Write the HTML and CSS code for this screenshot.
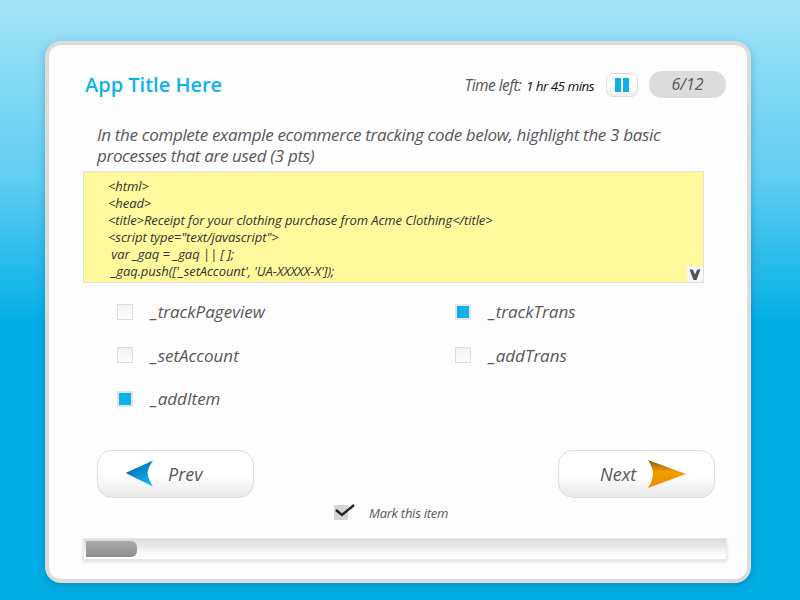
FILE: index.html
```html
<!DOCTYPE html>
<html lang="en">
<head>
    <meta charset="UTF-8">
    <title>App Title Here</title>
    <link rel="stylesheet" href="styles.css">
</head>
<body>

    <div class="card">
        <div class="header">
            <h1>App Title Here</h1>
            <div class="time">Time left: <b>1 hr 45 mins</b></div>
            <button class="pause" type="button" aria-label="Pause"><i></i><i></i></button>
            <div class="count">6/12</div>
        </div>

        <p class="question">In the complete example ecommerce tracking code below, highlight the 3 basic processes that are used (3 pts)</p>

        <div class="code">
<pre>&lt;html&gt;
&lt;head&gt;
&lt;title&gt;Receipt for your clothing purchase from Acme Clothing&lt;/title&gt;
&lt;script type="text/javascript"&gt;
 var _gaq = _gaq || [ ];
 _gaq.push(['_setAccount', 'UA-XXXXX-X']);</pre>
            <span class="scroll">
                <svg width="12" height="13" viewBox="0 0 12 12"><path d="M0.5 1 L3.8 1 L6 6 L8.2 1 L11.5 1 L7.5 11.5 L4.5 11.5 Z" fill="#555"/></svg>
            </span>
        </div>

        <div class="options">
            <label class="option"><span class="box"></span>_trackPageview</label>
            <label class="option"><span class="box on"></span>_trackTrans</label>
            <label class="option"><span class="box"></span>_setAccount</label>
            <label class="option"><span class="box"></span>_addTrans</label>
            <label class="option"><span class="box on"></span>_addItem</label>
        </div>

        <div class="nav">
            <button class="btn prev" type="button">
                <svg width="29" height="27" viewBox="0 0 29 27">
                    <defs>
                        <linearGradient id="blue" x1="0" y1="0" x2="0.7" y2="1">
                            <stop offset="0" stop-color="#0a5a90"/>
                            <stop offset="0.5" stop-color="#0a86c6"/>
                            <stop offset="1" stop-color="#10b6f0"/>
                        </linearGradient>
                    </defs>
                    <path d="M0.5 13 L28 0.5 Q23 8 22.5 13 Q23 19 28 26.5 Z" fill="url(#blue)"/>
                </svg>
                Prev
            </button>
            <button class="btn next" type="button">
                Next
                <svg width="38" height="28" viewBox="0 0 38 28">
                    <defs>
                        <linearGradient id="orange" x1="0" y1="0" x2="0" y2="1">
                            <stop offset="0" stop-color="#8f5a10"/>
                            <stop offset="0.42" stop-color="#f29c00"/>
                            <stop offset="1" stop-color="#e88f00"/>
                        </linearGradient>
                    </defs>
                    <path d="M0 0 L38 14 L0 28 Q5 20 5 14 Q5 8 0 0 Z" fill="url(#orange)"/>
                </svg>
            </button>
        </div>

        <label class="mark">
            <span class="mark-box">
                <svg width="22" height="16" viewBox="0 0 22 16"><path d="M2 7 L8 12 L20 2" fill="none" stroke="#222" stroke-width="2.4"/></svg>
            </span>
            Mark this item
        </label>

        <div class="progress"><div class="bar"></div></div>
    </div>

</body>
</html>
```

FILE: styles.css
```css
html, body {
    height: 100%;
}
body {
    margin: 0;
    font-family: "Open Sans", Arial, sans-serif;
    font-style: italic;
    color: #58585a;
    background: linear-gradient(#a3e3f8 0%, #5fcdf2 30%, #00aee6 54%, #00aee6 100%);
    overflow: hidden;
}
.card {
    box-sizing: border-box;
    width: 706px;
    height: 542px;
    margin: 0 0 0 45px;
    position: relative;
    top: 41px;
    padding: 26px 21px 0 34px;
    background: #fdfdfd;
    border: 4px solid #dcdcdc;
    border-radius: 16px;
    box-shadow: 0 3px 8px rgba(0, 80, 120, 0.3);
}
.header {
    display: flex;
    align-items: center;
    height: 27px;
}
h1 {
    margin: 0 auto 0 2px;
    font-size: 20px;
    font-weight: 600;
    font-style: normal;
    color: #0db4ea;
}
.time {
    font-size: 15.5px;
    letter-spacing: -0.55px;
}
.time b {
    margin-left: 1px;
    font-size: 13.5px;
    font-weight: 400;
    color: #111;
}
.pause {
    display: flex;
    justify-content: center;
    gap: 2px;
    box-sizing: border-box;
    width: 32px;
    height: 24px;
    margin: 0 11px 0 12px;
    padding: 4px 0;
    background: linear-gradient(#fff 50%, #eee);
    border: 1px solid #ddd;
    border-radius: 7px;
}
.pause i {
    width: 6px;
    background: #0db0ea;
}
.count {
    width: 77px;
    height: 27px;
    line-height: 27px;
    text-align: center;
    font-size: 16px;
    background: #dcdcdc;
    border-radius: 13px;
}
.question {
    margin: 26px 30px 0 14px;
    font-size: 17px;
    line-height: 21px;
    letter-spacing: -0.33px;
}
.code {
    position: relative;
    box-sizing: border-box;
    width: 621px;
    height: 112px;
    margin: 5px 0 0 0;
    padding: 6px 0 0 24px;
    background: #fff99e;
    border: 1px solid #e0e0e0;
}
pre {
    margin: 0;
    font-family: "Open Sans", Arial, sans-serif;
    font-size: 13px;
    line-height: 17px;
    letter-spacing: -0.08px;
    color: #333;
}
.scroll {
    position: absolute;
    right: 0;
    bottom: 0;
    display: flex;
    align-items: center;
    justify-content: center;
    width: 16px;
    height: 16px;
    background: #f6f6f6;
}
.options {
    display: grid;
    grid-template-columns: 338px auto;
    grid-auto-rows: 43.5px;
    margin: 6.75px 0 0 34px;
}
.option {
    display: flex;
    align-items: center;
    height: 43.5px;
    font-size: 17px;
}
.box {
    box-sizing: border-box;
    width: 16px;
    height: 16px;
    margin-right: 18px;
    background: linear-gradient(#f2f2f2, #fdfdfd);
    border: 1px solid #ddd;
}
.box.on {
    background: #0db0ea;
    border: 2px solid #e4e4e4;
}
.nav {
    display: flex;
    justify-content: space-between;
    margin: 29.25px 11px 0 14px;
}
.btn {
    display: flex;
    align-items: center;
    box-sizing: border-box;
    width: 157px;
    height: 48px;
    font-family: inherit;
    font-style: italic;
    font-size: 18px;
    color: #58585a;
    background: linear-gradient(#fff 50%, #e9e9e9);
    border: 1px solid #dcdcdc;
    border-radius: 15px;
}
.prev {
    gap: 14px;
    padding: 0 0 0 27px;
}
.next {
    gap: 12px;
    padding: 0 0 0 41px;
}
.mark {
    display: flex;
    align-items: center;
    height: 20px;
    margin: 5px 0 0 251px;
    font-size: 13px;
    letter-spacing: -0.25px;
}
.mark-box {
    width: 14px;
    height: 15px;
    margin-right: 21px;
    background: #d4d4d4;
}
.mark-box svg {
    display: block;
    margin-top: -2px;
}
.progress {
    box-sizing: border-box;
    width: 644px;
    height: 22px;
    margin: 15px 0 0 0;
    padding: 2px;
    background: linear-gradient(#dcdcdc 0, #e4e4e4 5px, #fff 17px);
    border: 1px solid #e8e8e8;
    box-shadow: 0 2px 3px rgba(0, 0, 0, 0.12);
}
.bar {
    width: 51px;
    height: 16px;
    background: linear-gradient(#aaa, #8f8f8f);
    border-radius: 0 6px 6px 0;
}
```
